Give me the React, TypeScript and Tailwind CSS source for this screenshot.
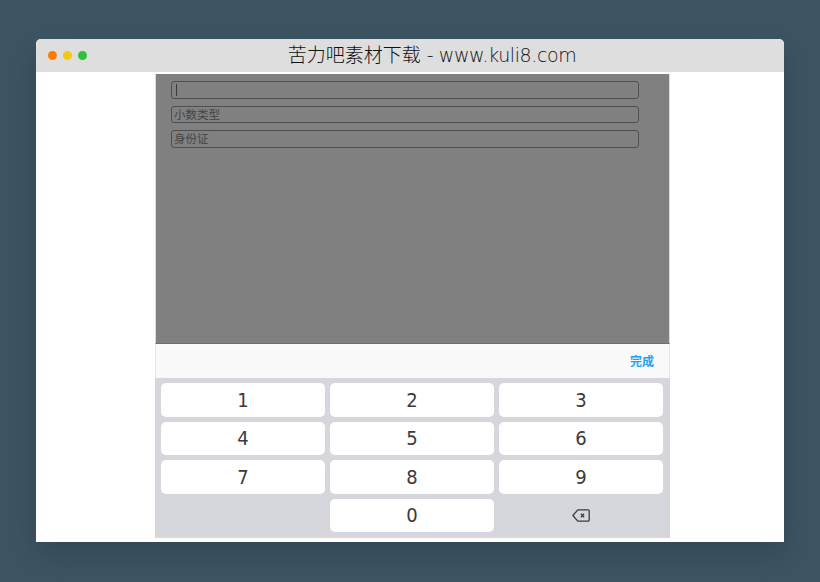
const ROWS = [
  ['1', '2', '3'],
  ['4', '5', '6'],
  ['7', '8', '9'],
];

const DOTS = ['bg-[#ff7c00]', 'bg-[#f2c813]', 'bg-[#2ec23a]'];

const Field = ({ label, caret, className }: { label?: string; caret?: boolean; className: string }) => (
  <div
    className={`flex w-[468px] items-center rounded-[3px] border border-[#4f4f4f] pl-[2px] text-[11.5px] leading-none text-[#444] ${className}`}
  >
    {caret && <span className="ml-[2px] h-[12px] w-px bg-[#3a3a3a]" />}
    {label}
  </div>
);

const Key = ({ value, className = '' }: { value: string; className?: string }) => (
  <div
    className={`flex w-[164px] items-center justify-center rounded-[5px] bg-white font-['DejaVu_Sans',sans-serif] text-[20px] text-[#3a3a3a] [font-stretch:condensed] ${className}`}
  >
    {value}
  </div>
);

const App = () => {
  return (
    <div className="h-[582px] w-[820px] overflow-hidden bg-[#3d5463] px-[36px] pt-[39px] font-['Noto_Sans','Noto_Sans_CJK_SC',sans-serif]">
      <div className="h-[503px] w-[748px] rounded-t-[5px] bg-white shadow-[0_12px_30px_rgba(40,60,75,0.55)]">
        <header className="relative flex h-[33px] items-center justify-center rounded-t-[5px] bg-[#dedede] pl-[44px]">
          <div className="absolute top-[12px] left-[12px] flex gap-[6px]">
            {DOTS.map((dot) => (
              <span key={dot} className={`size-[9px] rounded-full ${dot}`} />
            ))}
          </div>
          <h1 className="font-['DejaVu_Sans','Noto_Sans_CJK_SC',sans-serif] text-[19px] leading-none font-extralight text-[#111]">
            苦力吧素材下载 <span className="tracking-[-0.4px]">- www.kuli8.com</span>
          </h1>
        </header>

        <main className="ml-[119px] flex h-[466px] w-[515px] flex-col pt-[2px]">
          <section className="h-[270px] border-x border-b border-x-[#dcdcdc] border-b-[#6e6e6e] bg-[#808080] pt-[7px] pl-[15px]">
            <Field caret className="h-[18px]" />
            <Field label="小数类型" className="mt-[7px] h-[17px]" />
            <Field label="身份证" className="mt-[7px] h-[18px] pb-[1px]" />
          </section>

          <div className="flex h-[34px] items-center justify-end border-x border-[#e4e4e4] bg-[#f9f9f9] pt-[1px] pr-[15px] text-[12px] font-bold text-[#1fa3f5]">
            完成
          </div>

          <div className="flex h-[160px] flex-col bg-[#d6d7dc] pt-[5px] pl-[6px]">
            {ROWS.map((row) => (
              <div key={row[0]} className="mb-[5px] flex h-[33.5px] gap-[5px]">
                {row.map((value) => (
                  <Key key={value} value={value} />
                ))}
              </div>
            ))}
            <div className="flex h-[33px] gap-[5px]">
              <div className="w-[164px]" />
              <Key value="0" />
              <div className="flex w-[164px] items-center justify-center">
                <svg width="18" height="13" viewBox="0 0 18 13" fill="none" stroke="#3a3a3f" strokeWidth="1.3">
                  <path d="M5.8 .8H16a1.2 1.2 0 0 1 1.2 1.2v9a1.2 1.2 0 0 1-1.2 1.2H5.8L.9 6.5z" strokeLinejoin="round" />
                  <path d="M8.9 4.8l3.2 3.4M12.1 4.8L8.9 8.2" />
                </svg>
              </div>
            </div>
          </div>
        </main>
      </div>
    </div>
  );
};

export default App;
